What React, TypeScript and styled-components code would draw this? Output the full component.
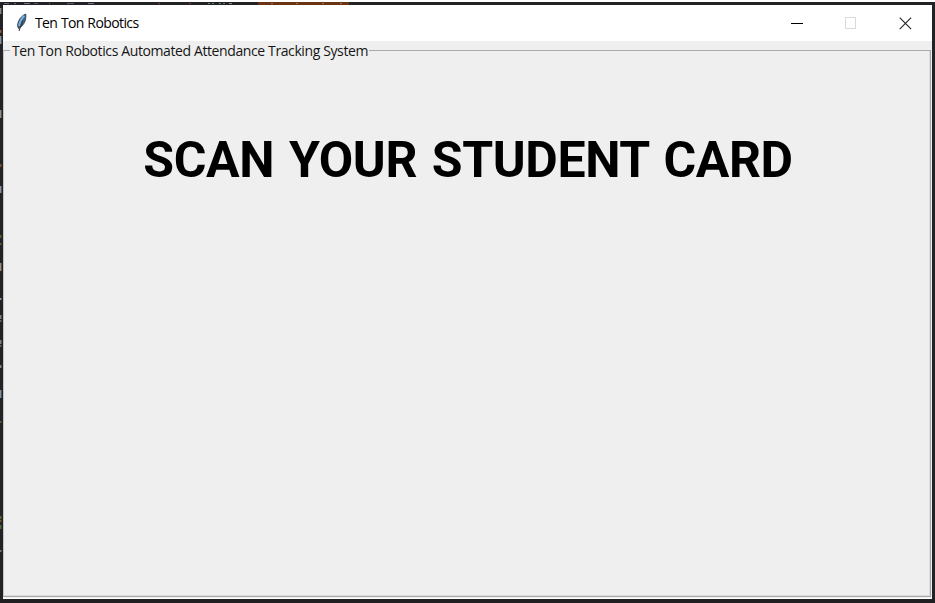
import React from 'react';
import styled, { createGlobalStyle } from 'styled-components';

const GlobalStyle = createGlobalStyle`
  * { box-sizing: border-box; }
  html, body { margin: 0; background: #fff; overflow: hidden; }
`;

const Desktop = styled.main`
  width: 935px;
  height: 603px;
  padding-top: 2px;
  display: flex;
  flex-direction: column;
  background: #fff;
`;

const CodeTop = styled.svg`
  display: block;
  flex: none;
  width: 935px;
  height: 3px;
  background: #232325;
`;

const Middle = styled.div`
  display: grid;
  grid-template-columns: 3px 929px 3px;
  height: 594px;
  background: #232325;
`;

const CodeLeft = styled.svg`
  display: block;
  width: 3px;
  height: 594px;
`;

const Bottom = styled.div`
  flex: 1;
  background: #202022;
`;

const Window = styled.section`
  display: flex;
  flex-direction: column;
  background: #efefef;
  border-bottom: 1px solid #fff;
`;

const TitleBar = styled.header`
  height: 36px;
  flex: none;
  display: flex;
  align-items: center;
  background: #fff;
  padding-left: 11px;
`;

const Feather = styled.svg`
  width: 15px;
  height: 20px;
  flex: none;
`;

const Title = styled.h1`
  margin: 0 auto 0 6px;
  font: 400 14px/18px "Open Sans", sans-serif;
  letter-spacing: -0.6px;
  word-spacing: 0.5px;
  color: #000;
`;

const Controls = styled.div`
  display: grid;
  grid-template-columns: repeat(3, 54px);
  height: 36px;
`;

const Control = styled.button`
  border: 0;
  padding: 0;
  background: transparent;
  display: grid;
  place-items: center;
`;

const Group = styled.fieldset`
  flex: 1;
  min-width: 0;
  margin: 1px 1px 1px 0;
  padding: 0;
  border: 1px solid #a9a9a9;
  border-left-color: #c4c4c4;
  box-shadow: inset -1px -1px #dcdcdc;
`;

const Legend = styled.legend`
  margin-left: 6px;
  padding: 1px 1px 0 2px;
  font: 400 14px/16px "Open Sans", sans-serif;
  letter-spacing: -0.4px;
  word-spacing: 0.1px;
  color: #151515;
  white-space: nowrap;
`;

const Prompt = styled.p`
  margin: 71px 0 0;
  padding-left: 2px;
  text-align: center;
  white-space: nowrap;
  font: 700 50px/60px Roboto, sans-serif;
  letter-spacing: -0.4px;
  word-spacing: 2.8px;
  color: #000;
`;

const topMarks: [number, number, string][] = [
  [4, 5, '#5d6b78'], [14, 2, '#5d6b78'], [24, 6, '#667788'], [34, 4, '#4b5966'],
  [49, 1, '#5d6b78'], [67, 7, '#52606d'], [88, 6, '#667788'],
  [158, 2, '#7a3b28'], [189, 2, '#7a3b28'],
  [208, 2, '#658763'], [212, 2, '#658763'], [219, 2, '#658763'], [223, 2, '#658763'],
  [229, 3, '#7f8b96'],
];

const blockMarks = [271, 296, 322, 340];

const leftMarks: [number, number, string][] = [
  [3, 6, '#85898c'], [25, 3, '#8b5c45'], [31, 8, '#8793a0'],
  [105, 8, '#9b8e80'], [159, 3, '#7f4f35'], [181, 7, '#8793a0'],
  [230, 3, '#5d6330'], [238, 2, '#5d6330'], [258, 8, '#9b8e80'],
  [293, 2, '#8797a4'], [310, 4, '#8b8278'], [315, 2, '#77604f'],
  [335, 4, '#8b8278'], [340, 2, '#77604f'], [360, 3, '#86888a'],
  [385, 8, '#7f92a2'], [416, 2, '#5d6330'], [511, 3, '#56702f'],
  [515, 2, '#74592f'], [520, 4, '#56702f'], [545, 2, '#77797b'],
];

export default function App() {
  return (
    <>
      <GlobalStyle />
      <Desktop>
        <CodeTop viewBox="0 0 935 3" aria-hidden="true">
          <rect x="258" width="91" height="3" fill="#6a3412" />
          {topMarks.map(([x, w, fill]) => <rect key={x} x={x} y="1" width={w} height="1" fill={fill} />)}
          {blockMarks.map((x) => <rect key={x} x={x} y="1" width="2" height="1" fill="#93704f" />)}
        </CodeTop>
        <Middle>
          <CodeLeft viewBox="0 0 3 594" aria-hidden="true">
            {leftMarks.map(([y, h, fill]) => <rect key={y} y={y} width="1.4" height={h} fill={fill} />)}
          </CodeLeft>
          <Window>
            <TitleBar>
              <Feather viewBox="0 0 15 20">
                <path d="M11.8 1C7.5 2.6 3.8 7.4 3.5 12.7l1 2.8c4.6-2.2 8-7.4 7.3-14.5z" fill="#3b6794" stroke="#26323d" strokeWidth=".8" />
                <path d="M10.3 3C7.4 5.5 5.7 9 5.1 12.8" stroke="#82b2e2" strokeWidth="1.8" fill="none" />
                <path d="M8.8 7.5 5 18" stroke="#333" strokeWidth="1" fill="none" />
              </Feather>
              <Title>Ten Ton Robotics</Title>
              <Controls>
                <Control aria-label="Minimize">
                  <svg width="13" height="13"><path d="M0 6.5h12" stroke="#000" /></svg>
                </Control>
                <Control aria-label="Maximize" disabled>
                  <svg width="13" height="13"><path d="M.5.5h10v11H.5z" stroke="#d9d9d9" fill="none" /></svg>
                </Control>
                <Control aria-label="Close">
                  <svg width="13" height="13"><path d="m.7.7 11.4 11.4M12.1.7.7 12.1" stroke="#222" strokeWidth="1.1" fill="none" /></svg>
                </Control>
              </Controls>
            </TitleBar>
            <Group>
              <Legend>Ten Ton Robotics Automated Attendance Tracking System</Legend>
              <Prompt>SCAN YOUR STUDENT CARD</Prompt>
            </Group>
          </Window>
          <div />
        </Middle>
        <Bottom />
      </Desktop>
    </>
  );
}
